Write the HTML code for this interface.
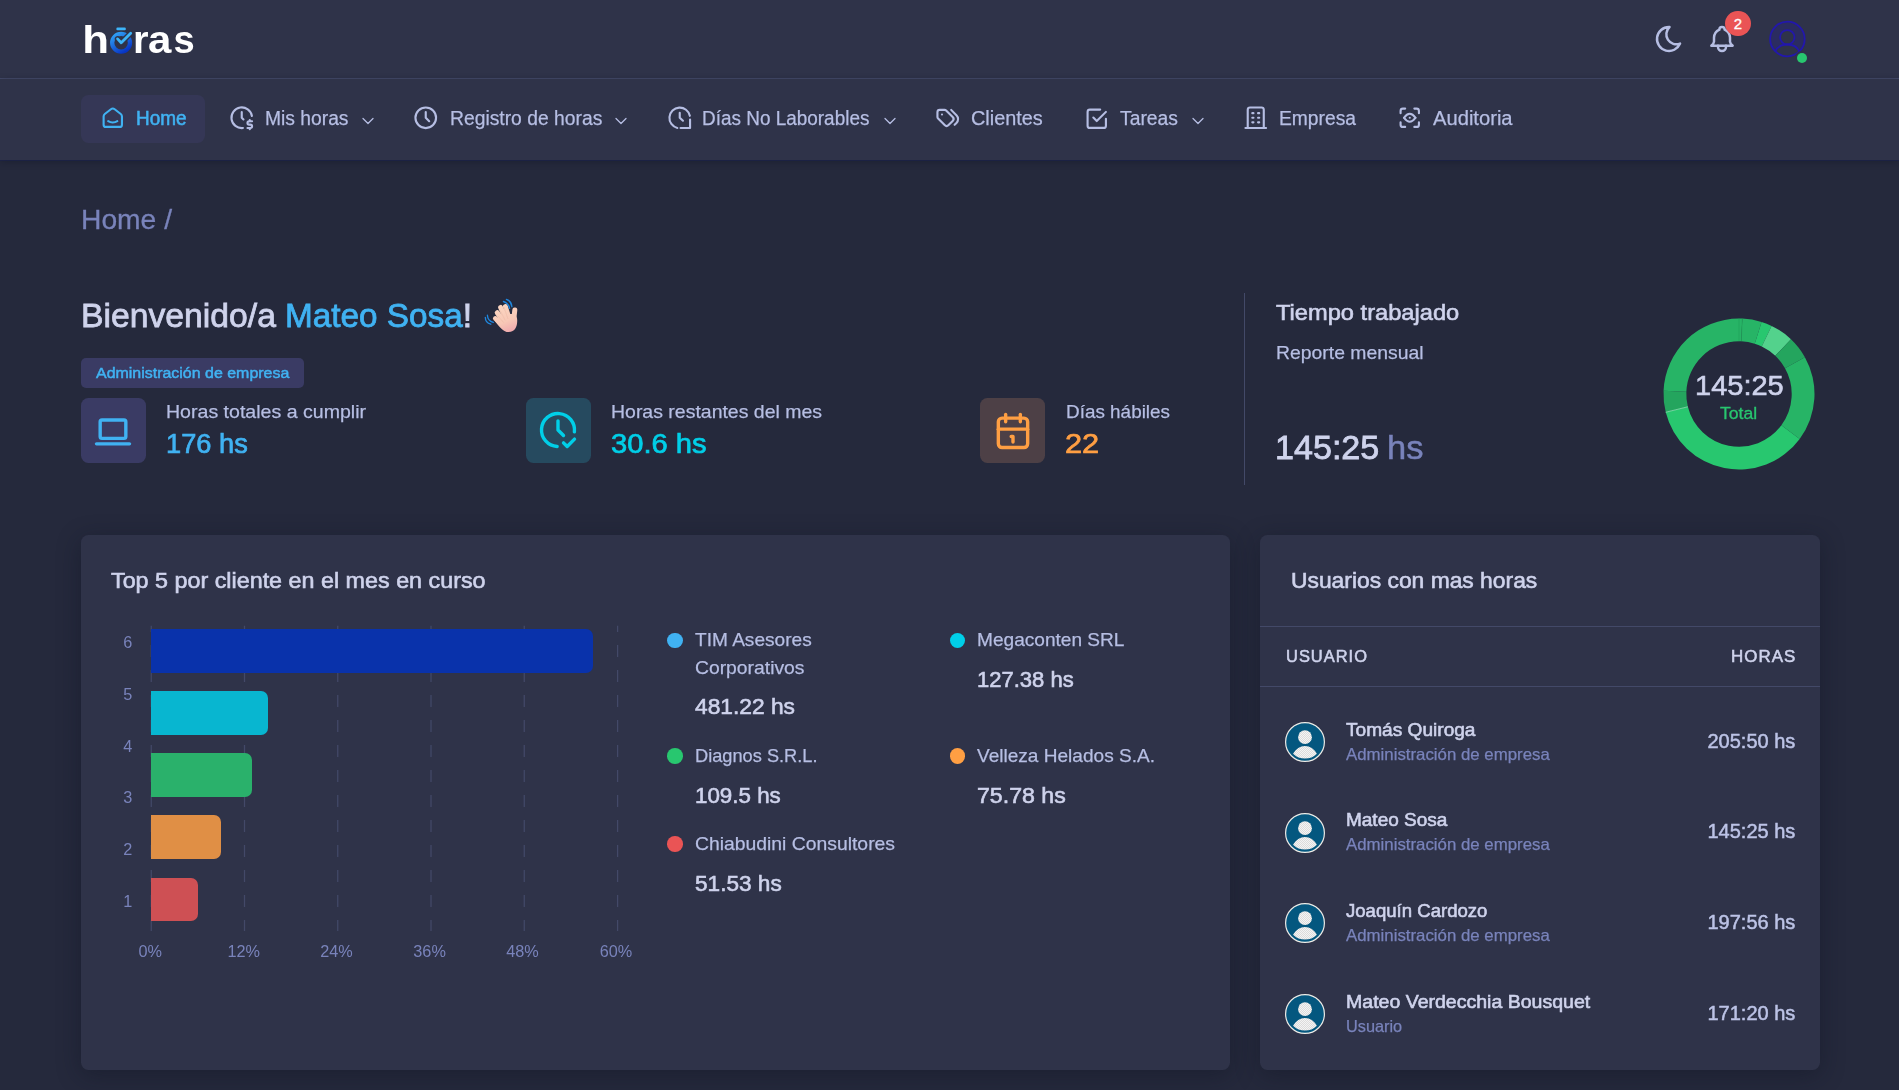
<!DOCTYPE html>
<html lang="es">
<head>
<meta charset="utf-8">
<title>Horas - Home</title>
<style>
*{box-sizing:border-box;margin:0;padding:0}
html,body{width:1899px;height:1090px;overflow:hidden;background:#25293c}
body{position:relative;font-family:"Liberation Sans",sans-serif;color:#b6bee3}
.abs{position:absolute}
.t{position:absolute;white-space:nowrap;line-height:1;font-family:"Liberation Sans",sans-serif}
.topbar{position:absolute;left:0;top:0;width:1899px;height:78px;background:#2f3349}
.topline{position:absolute;left:0;top:78px;width:1899px;height:1px;background:#434968}
.menu{position:absolute;left:0;top:79px;width:1899px;height:81px;background:#2f3349;box-shadow:0 1px 0 rgba(26,32,78,.55),0 2px 7px rgba(15,20,34,.4)}
.pill{position:absolute;left:81px;top:95px;width:123.6px;height:47.5px;border-radius:7.5px;background:#353756}
.card{position:absolute;background:#2f3349;border-radius:7.5px;box-shadow:0 5px 23px rgba(15,20,34,.42)}
.ico{position:absolute;fill:none;stroke:#b6bee3;stroke-width:1.85;stroke-linecap:round;stroke-linejoin:round;overflow:visible}
.box{position:absolute;top:398px;width:65px;height:64.5px;border-radius:7.5px}
.dot{position:absolute;width:15.6px;height:15.6px;border-radius:50%}
.hr{position:absolute;height:1px;background:#434968}
.bar{position:absolute;left:151.25px;height:43.5px;border-radius:0 7px 7px 0}
.av{position:absolute;left:1285px;width:40px;height:40px}
</style>
</head>
<body>
<div class="topbar"></div>
<div class="topline"></div>
<div class="menu"></div>
<div class="pill"></div>

<!-- logo -->
<svg class="abs" style="left:80px;top:18px;overflow:visible;will-change:transform" width="120" height="42" viewBox="0 0 120 42">
  <defs>
    <linearGradient id="lg" x1="0.15" y1="0" x2="0.75" y2="1"><stop offset="0" stop-color="#2f9ff5"/><stop offset="1" stop-color="#0734c4"/></linearGradient>
  </defs>
  <g font-family="Liberation Sans, sans-serif" font-weight="700" font-size="39.2" fill="#ffffff">
    <text transform="translate(2.14 34.5) scale(1.118 1)">h</text>
    <text transform="translate(52.96 34.5) scale(1.02 1)">r</text>
    <text transform="translate(67.98 34.5) scale(1.072 1)">a</text>
    <text transform="translate(93.47 34.5) scale(0.973 1)">s</text>
  </g>
  <circle cx="41.1" cy="24.7" r="8.9" fill="none" stroke="url(#lg)" stroke-width="4.3"/>
  <rect x="36.3" y="9.6" width="9.6" height="2.7" rx="1.35" fill="#3db4f8"/>
  <path d="M37.6 20.9l3.6 3.9l9.5-9.5" fill="none" stroke="#2f3349" stroke-width="5.6" stroke-linecap="round" stroke-linejoin="round"/>
  <path d="M37.6 20.9l3.6 3.9l9.5-9.5" fill="none" stroke="#3db4f8" stroke-width="2.8" stroke-linecap="round" stroke-linejoin="round"/>
</svg>

<!-- top right icons -->
<svg class="ico" style="left:1653px;top:23px" width="32" height="32" viewBox="0 0 24 24"><path d="M12 3c.132 0 .263 0 .393 0a7.5 7.5 0 0 0 7.92 12.446a9 9 0 1 1 -8.313 -12.454z"/></svg>
<svg class="ico" style="left:1705.9px;top:23px" width="32" height="32" viewBox="0 0 24 24"><path d="M10 5a2 2 0 1 1 4 0a7 7 0 0 1 4 6v3a4 4 0 0 0 2 3h-16a4 4 0 0 0 2 -3v-3a7 7 0 0 1 4 -6"/><path d="M9 17v1a3 3 0 0 0 6 0v-1"/></svg>
<div class="abs" style="left:1725.3px;top:10.8px;width:25.4px;height:25.4px;border-radius:50%;background:#ea5455"></div>
<div class="t" style="left:1725.3px;top:16.2px;width:25.4px;text-align:center;font-size:15px;color:#fff;-webkit-text-stroke:0.3px #fff">2</div>
<svg class="abs" style="left:1767px;top:19px;overflow:visible" width="40" height="40" viewBox="0 0 40 40"><circle cx="20.4" cy="20" r="17.3" fill="#2b2c60"/><path d="M8.300 32.100C10.600 27.700 15 25.500 20.300 25.500C25.600 25.500 30 27.700 32.300 32.100A17.300 17.300 0 0 1 8.300 32.100Z" fill="#2f3349"/><circle cx="20.300" cy="18.300" r="7.200" fill="#2f3349" stroke="#2217ad" stroke-width="1.800"/><path d="M8.300 32.100C10.600 27.700 15 25.500 20.300 25.500C25.600 25.500 30 27.700 32.300 32.100" fill="none" stroke="#2217ad" stroke-width="1.800"/><circle cx="20.400" cy="20" r="17.300" fill="none" stroke="#2217ad" stroke-width="1.800"/></svg>
<div class="abs" style="left:1796.800px;top:52.600px;width:10.400px;height:10.400px;border-radius:50%;background:#28c76f;box-shadow:0 0 0 2px #2f3349"></div>

<!-- nav icons -->
<svg class="ico" style="left:98.9px;top:104.4px;stroke:#40b2f2" width="27.5" height="27.5" viewBox="0 0 24 24"><path d="M19 8.71l-5.333 -4.148a2.666 2.666 0 0 0 -3.274 0l-5.334 4.148a2.665 2.665 0 0 0 -1.029 2.105v7.2a2 2 0 0 0 2 2h12a2 2 0 0 0 2 -2v-7.2c0 -.823 -.38 -1.6 -1.03 -2.105"/><path d="M16 15c-2.21 1.333 -5.792 1.333 -8 0"/></svg>
<svg class="ico" style="left:228px;top:104px" width="27.5" height="27.5" viewBox="0 0 24 24"><path d="M20.866 10.45a9 9 0 1 0 -7.815 10.488"/><path d="M12 7v5l1.5 1.5"/><path d="M21 15h-2.500a1.500 1.500 0 0 0 0 3h1a1.500 1.500 0 0 1 0 3h-2.500"/><path d="M19 21v1m0 -8v1"/></svg>
<svg class="ico" style="left:412px;top:104.2px" width="27.5" height="27.5" viewBox="0 0 24 24"><path d="M3 12a9 9 0 1 0 18 0a9 9 0 0 0 -18 0"/><path d="M12 7v5l3 3"/></svg>
<svg class="ico" style="left:665.7px;top:104px" width="27.5" height="27.5" viewBox="0 0 24 24"><path d="M20.8 10.3a9 9 0 1 0 -10.9 10.62"/><path d="M12 7.7v4.3l2.8 2.6"/><path d="M21 13.6v7.4h-8.3"/></svg>
<svg class="ico" style="left:933.7px;top:103.2px" width="27.5" height="27.5" viewBox="0 0 24 24"><path d="M3 8v4.172a2 2 0 0 0 .586 1.414l5.71 5.71a2.41 2.41 0 0 0 3.408 0l3.592 -3.592a2.41 2.41 0 0 0 0 -3.408l-5.71 -5.71a2 2 0 0 0 -1.414 -.586h-4.172a2 2 0 0 0 -2 2z"/><path d="M18 19l1.592 -1.592a4.82 4.82 0 0 0 0 -6.816l-4.592 -4.592"/><path d="M7 10h-.01"/></svg>
<svg class="ico" style="left:1083.2px;top:104.5px" width="27.5" height="27.5" viewBox="0 0 24 24"><path d="M9 11l3 3l8 -8"/><path d="M20 12v6a2 2 0 0 1 -2 2h-12a2 2 0 0 1 -2 -2v-12a2 2 0 0 1 2 -2h9"/></svg>
<svg class="ico" style="left:1241.7px;top:104.2px" width="27.5" height="27.5" viewBox="0 0 24 24"><path d="M3 21l18 0"/><path d="M9 8l1 0"/><path d="M9 12l1 0"/><path d="M9 16l1 0"/><path d="M14 8l1 0"/><path d="M14 12l1 0"/><path d="M14 16l1 0"/><path d="M5 21v-16a2 2 0 0 1 2 -2h10a2 2 0 0 1 2 2v16"/></svg>
<svg class="ico" style="left:1395.7px;top:104.2px" width="27.5" height="27.5" viewBox="0 0 24 24"><path d="M4 8v-2a2 2 0 0 1 2 -2h2"/><path d="M4 16v2a2 2 0 0 0 2 2h2"/><path d="M16 4h2a2 2 0 0 1 2 2v2"/><path d="M16 20h2a2 2 0 0 0 2 -2v-2"/><path d="M7 12c3.333 -4.667 6.667 -4.667 10 0"/><path d="M7 12c3.333 4.667 6.667 4.667 10 0"/><path d="M12 12h-.01"/></svg>
<!-- chevrons -->
<svg class="ico" style="left:357.5px;top:110.6px;stroke-width:1.5" width="20" height="20" viewBox="0 0 24 24"><path d="M6 9l6 6l6 -6"/></svg>
<svg class="ico" style="left:611.0px;top:110.6px;stroke-width:1.5" width="20" height="20" viewBox="0 0 24 24"><path d="M6 9l6 6l6 -6"/></svg>
<svg class="ico" style="left:880.0px;top:110.6px;stroke-width:1.5" width="20" height="20" viewBox="0 0 24 24"><path d="M6 9l6 6l6 -6"/></svg>
<svg class="ico" style="left:1187.7px;top:110.6px;stroke-width:1.5" width="20" height="20" viewBox="0 0 24 24"><path d="M6 9l6 6l6 -6"/></svg>

<!-- waving hand emoji -->
<svg class="abs" style="left:475px;top:290px;overflow:visible" width="60" height="50" viewBox="0 0 60 50">
  <defs>
    <linearGradient id="hg" gradientUnits="userSpaceOnUse" x1="24" y1="14" x2="36" y2="43"><stop offset="0" stop-color="#fcd7c3"/><stop offset="0.6" stop-color="#f8c8b6"/><stop offset="1" stop-color="#efa6ad"/></linearGradient>
  </defs>
  <g stroke="url(#hg)" stroke-width="4.9" stroke-linecap="round" fill="none">
    <path d="M20.4 28.5L28.4 35.8"/>
    <path d="M22.2 22.7L30.3 33.9"/>
    <path d="M25.6 17.4L32.1 32.1"/>
    <path d="M30.4 16.500L34.9 31.2"/>
    <path d="M39.8 20L38.5 32" stroke-width="5"/>
  </g>
  <path d="M20.200 31.400C22 27 30 24 36 24C39.500 24 42.200 26 42.200 30C42.400 36 40.500 42 33.500 42C28.500 42 25 37.500 20.200 31.400Z" fill="url(#hg)"/>
  <g fill="none" stroke="#eab7a4" stroke-width="0.55" stroke-linecap="round" opacity="0.8"><path d="M23.200 26.300L28.300 32.200"/><path d="M25.400 21L30 30"/><path d="M29.100 17.400L32.800 28.500"/></g>
  <g fill="none" stroke="#1f86dd" stroke-width="1.350" stroke-linecap="round">
    <path d="M10.300 27.300C10.300 30.800 12.600 33.400 15.800 34.200"/>
    <path d="M12.400 25.200C12.600 29 14.900 31.400 18.300 32.300"/>
    <path d="M31.400 9.400C34.600 10.500 36.600 13.300 36.900 16.700"/>
    <path d="M28.400 11.500C31.700 12.600 33.900 15 34.600 18.300"/>
  </g>
</svg>

<!-- badge -->
<div class="abs" style="left:81px;top:358px;width:222.8px;height:29.8px;border-radius:5px;background:#3a3b64"></div>

<!-- stat boxes -->
<div class="box" style="left:81px;background:#3a3b64"></div>
<div class="box" style="left:526px;background:#264a5f"></div>
<div class="box" style="left:980px;background:#4d4046"></div>
<svg class="ico" style="left:91.3px;top:408.7px;stroke:#40b2f2" width="44" height="44" viewBox="0 0 24 24"><path d="M3 19l18 0"/><path d="M5 6m0 1a1 1 0 0 1 1 -1h12a1 1 0 0 1 1 1v8a1 1 0 0 1 -1 1h-12a1 1 0 0 1 -1 -1z"/></svg>
<svg class="ico" style="left:535.9px;top:407.8px;stroke:#00cfe8" width="44" height="44" viewBox="0 0 24 24"><path d="M20.942 13.021a9 9 0 1 0 -9.407 7.967"/><path d="M12 7v5l3 3"/><path d="M15 19l2 2l4 -4"/></svg>
<svg class="ico" style="left:991px;top:408.5px;stroke:#ff9f43" width="44" height="44" viewBox="0 0 24 24"><path d="M4 7a2 2 0 0 1 2 -2h12a2 2 0 0 1 2 2v12a2 2 0 0 1 -2 2h-12a2 2 0 0 1 -2 -2z"/><path d="M16 3v4"/><path d="M8 3v4"/><path d="M4 11h16"/><path d="M11 15h1v3"/></svg>

<!-- vertical divider -->
<div class="abs" style="left:1244px;top:293px;width:1px;height:192px;background:#434968"></div>

<!-- donut -->
<svg class="abs" id="donut" style="left:1659.4px;top:314.2px" width="160" height="160" viewBox="-80 -80 160 160">
<path d="M0.00 -75.50A75.5 75.5 0 0 1 3.29 -75.43L2.30 -52.65A52.7 52.7 0 0 0 0.00 -52.70Z" fill="#27b466"/>
<path d="M3.29 -75.43A75.5 75.5 0 0 1 22.58 -72.05L15.76 -50.29A52.7 52.7 0 0 0 2.30 -52.65Z" fill="#27b466"/>
<path d="M22.58 -72.05A75.5 75.5 0 0 1 32.62 -68.09L22.77 -47.53A52.7 52.7 0 0 0 15.76 -50.29Z" fill="#28c76f"/>
<path d="M32.62 -68.09A75.5 75.5 0 0 1 51.97 -54.77L36.28 -38.23A52.7 52.7 0 0 0 22.77 -47.53Z" fill="#53d28c"/>
<path d="M51.97 -54.77A75.5 75.5 0 0 1 65.91 -36.83L46.00 -25.71A52.7 52.7 0 0 0 36.28 -38.23Z" fill="#24a55e"/>
<path d="M65.91 -36.83A75.5 75.5 0 0 1 60.69 44.91L42.36 31.35A52.7 52.7 0 0 0 46.00 -25.71Z" fill="#27b466"/>
<path d="M60.69 44.91A75.5 75.5 0 0 1 -73.26 18.27L-51.13 12.75A52.7 52.7 0 0 0 42.36 31.35Z" fill="#28c76f"/>
<path d="M-73.26 18.27A75.5 75.5 0 0 1 -75.43 -3.16L-52.65 -2.21A52.7 52.7 0 0 0 -51.13 12.75Z" fill="#24a55e"/>
<path d="M-75.43 -3.16A75.5 75.5 0 0 1 -0.00 -75.50L-0.00 -52.70A52.7 52.7 0 0 0 -52.65 -2.21Z" fill="#27b466"/>
<path d="M0.00 -75.50L0.00 -52.70" stroke="#1f9a55" stroke-width="0.5" fill="none"/>
<path d="M3.29 -75.43L2.30 -52.65" stroke="#1f9a55" stroke-width="0.5" fill="none"/>
<path d="M-73.26 18.27L-51.13 12.75" stroke="#7fdcaa" stroke-width="0.9" fill="none"/>
</svg>

<!-- cards -->
<div class="card" style="left:81px;top:535px;width:1148.500px;height:534.700px"></div>
<div class="card" style="left:1260px;top:535px;width:1559.600px;height:534.700px;width:559.600px"></div>
<div class="hr" style="left:1260px;top:626px;width:559.600px"></div>
<div class="hr" style="left:1260px;top:686px;width:559.600px"></div>

<!-- chart -->
<svg class="abs" style="left:0;top:0" width="700" height="1000" viewBox="0 0 700 1000">
  <defs><clipPath id="gc"><rect x="140" y="625.750" width="500" height="305.250"/></clipPath></defs>
  <g clip-path="url(#gc)" stroke="#434968" stroke-width="1.250" stroke-dasharray="12 13" fill="none">
    <path d="M151.250 620V932M244.500 620V932M337.750 620V932M431 620V932M524.250 620V932M617.600 620V932"/>
  </g>
</svg>
<div class="bar" style="top:629px;width:442px;background:#0932ab"></div>
<div class="bar" style="top:691px;width:116.500px;background:#08b6d0"></div>
<div class="bar" style="top:753px;width:101px;background:#2ab16b"></div>
<div class="bar" style="top:815px;width:69.800px;background:#e08f45"></div>
<div class="bar" style="top:877.600px;width:46.700px;background:#ce5054"></div>

<!-- legend dots -->
<div class="dot" style="left:667.3px;top:632.7px;background:#40b2f2"></div>
<div class="dot" style="left:949.6px;top:632.7px;background:#00cfe8"></div>
<div class="dot" style="left:667.3px;top:748.4px;background:#28c76f"></div>
<div class="dot" style="left:949.6px;top:748.4px;background:#ff9f43"></div>
<div class="dot" style="left:667.3px;top:836.4px;background:#ea5455"></div>

<!-- avatars -->
<svg width="0" height="0" style="position:absolute"><defs>
  <pattern id="chk" width="2" height="2" patternUnits="userSpaceOnUse"><rect width="2" height="2" fill="#f4f4f4"/><rect width="1" height="1" fill="#dcdcdc"/><rect x="1" y="1" width="1" height="1" fill="#dcdcdc"/></pattern>
  <g id="avatar"><circle cx="20" cy="20" r="19.4" fill="#04577f" stroke="#ecebe6" stroke-width="1.2"/><circle cx="20" cy="15.2" r="6.9" fill="url(#chk)"/><path d="M8.1 31.7C11 27 15 24.1 20 24.1C25 24.1 29 27 31.9 31.7A17 17 0 0 1 8.1 31.7Z" fill="url(#chk)"/></g>
</defs></svg>
<svg class="av" style="top:721.9px" viewBox="0 0 40 40"><use href="#avatar"/></svg>
<svg class="av" style="top:812.65px" viewBox="0 0 40 40"><use href="#avatar"/></svg>
<svg class="av" style="top:903.4px" viewBox="0 0 40 40"><use href="#avatar"/></svg>
<svg class="av" style="top:994.15px" viewBox="0 0 40 40"><use href="#avatar"/></svg>

<!-- texts -->
<div style="position:absolute;left:0;top:0;width:1899px;height:1090px;will-change:transform">
<div class="t" style="font-size:19.6px;top:109.01px;color:#40b2f2;-webkit-text-stroke:0.55px #40b2f2;left:136.40px;transform:scaleX(0.9678);transform-origin:0 50%;">Home</div>
<div class="t" style="font-size:19.6px;top:109.01px;color:#b6bee3;-webkit-text-stroke:0.25px #b6bee3;left:264.70px;transform:scaleX(0.9831);transform-origin:0 50%;">Mis horas</div>
<div class="t" style="font-size:19.6px;top:109.01px;color:#b6bee3;-webkit-text-stroke:0.25px #b6bee3;left:449.50px;transform:scaleX(0.9848);transform-origin:0 50%;">Registro de horas</div>
<div class="t" style="font-size:19.6px;top:109.01px;color:#b6bee3;-webkit-text-stroke:0.25px #b6bee3;left:702.40px;transform:scaleX(0.9666);transform-origin:0 50%;">Días No Laborables</div>
<div class="t" style="font-size:19.6px;top:109.01px;color:#b6bee3;-webkit-text-stroke:0.25px #b6bee3;left:970.80px;transform:scaleX(1.0142);transform-origin:0 50%;">Clientes</div>
<div class="t" style="font-size:19.6px;top:109.01px;color:#b6bee3;-webkit-text-stroke:0.25px #b6bee3;left:1119.60px;transform:scaleX(0.9862);transform-origin:0 50%;">Tareas</div>
<div class="t" style="font-size:19.6px;top:109.01px;color:#b6bee3;-webkit-text-stroke:0.25px #b6bee3;left:1278.80px;transform:scaleX(0.9821);transform-origin:0 50%;">Empresa</div>
<div class="t" style="font-size:19.6px;top:109.01px;color:#b6bee3;-webkit-text-stroke:0.25px #b6bee3;left:1433.40px;transform:scaleX(1.0292);transform-origin:0 50%;">Auditoria</div>
<div class="t" style="font-size:28.5px;top:204.87px;color:#7983bb;-webkit-text-stroke:0.3px #7983bb;left:81.00px;transform:scaleX(0.9905);transform-origin:0 50%;">Home /</div>
<div class="t" style="font-size:33.5px;top:298.74px;color:#cfd3ec;-webkit-text-stroke:0.8px #cfd3ec;left:81.30px;transform:scaleX(1.0066);transform-origin:0 50%;">Bienvenido/a</div>
<div class="t" style="font-size:33.5px;top:298.74px;color:#40b2f2;-webkit-text-stroke:0.8px #40b2f2;left:284.80px;transform:scaleX(0.9945);transform-origin:0 50%;">Mateo Sosa</div>
<div class="t" style="font-size:33.5px;top:298.74px;color:#cfd3ec;-webkit-text-stroke:1.0px #cfd3ec;left:462.70px;">!</div>
<div class="t" style="font-size:15.4px;top:365.06px;color:#40b2f2;-webkit-text-stroke:0.5px #40b2f2;left:96.00px;transform:scaleX(1.0365);transform-origin:0 50%;">Administración de empresa</div>
<div class="t" style="font-size:19px;top:401.92px;color:#b6bee3;-webkit-text-stroke:0.25px #b6bee3;left:166.25px;transform:scaleX(1.0294);transform-origin:0 50%;">Horas totales a cumplir</div>
<div class="t" style="font-size:27.5px;top:429.62px;color:#40b2f2;-webkit-text-stroke:0.7px #40b2f2;left:165.60px;transform:scaleX(0.9906);transform-origin:0 50%;">176 hs</div>
<div class="t" style="font-size:19px;top:401.92px;color:#b6bee3;-webkit-text-stroke:0.25px #b6bee3;left:611.00px;transform:scaleX(1.0247);transform-origin:0 50%;">Horas restantes del mes</div>
<div class="t" style="font-size:27.5px;top:429.62px;color:#00cfe8;-webkit-text-stroke:0.7px #00cfe8;left:610.60px;transform:scaleX(1.0596);transform-origin:0 50%;">30.6 hs</div>
<div class="t" style="font-size:19px;top:401.92px;color:#b6bee3;-webkit-text-stroke:0.25px #b6bee3;left:1065.80px;transform:scaleX(0.9946);transform-origin:0 50%;">Días hábiles</div>
<div class="t" style="font-size:27.5px;top:429.62px;color:#ff9f43;-webkit-text-stroke:0.7px #ff9f43;left:1065.40px;transform:scaleX(1.1179);transform-origin:0 50%;">22</div>
<div class="t" style="font-size:22px;top:302.28px;color:#cfd3ec;-webkit-text-stroke:0.6px #cfd3ec;left:1275.80px;transform:scaleX(1.0751);transform-origin:0 50%;">Tiempo trabajado</div>
<div class="t" style="font-size:19px;top:342.72px;color:#b6bee3;-webkit-text-stroke:0.25px #b6bee3;left:1275.50px;transform:scaleX(1.0193);transform-origin:0 50%;">Reporte mensual</div>
<div class="t" style="font-size:33.5px;top:431.14px;color:#cfd3ec;-webkit-text-stroke:0.8px #cfd3ec;left:1275.30px;transform:scaleX(1.0179);transform-origin:0 50%;">145:25</div>
<div class="t" style="font-size:33.5px;top:431.14px;color:#7983bb;-webkit-text-stroke:0.5px #7983bb;left:1386.80px;transform:scaleX(1.0285);transform-origin:0 50%;">hs</div>
<div class="t" style="font-size:27.5px;top:372.32px;color:#cfd3ec;-webkit-text-stroke:0.6px #cfd3ec;left:1694.50px;transform:scaleX(1.0544);transform-origin:0 50%;">145:25</div>
<div class="t" style="font-size:16.25px;top:405.14px;color:#28c76f;-webkit-text-stroke:0.3px #28c76f;left:1720.20px;transform:scaleX(1.0837);transform-origin:0 50%;">Total</div>
<div class="t" style="font-size:22px;top:570.18px;color:#cfd3ec;-webkit-text-stroke:0.6px #cfd3ec;left:111.25px;transform:scaleX(1.0598);transform-origin:0 50%;">Top 5 por cliente en el mes en curso</div>
<div class="t" style="font-size:16.25px;top:634.04px;color:#7983bb;right:1766.60px;">6</div>
<div class="t" style="font-size:16.25px;top:685.84px;color:#7983bb;right:1766.60px;">5</div>
<div class="t" style="font-size:16.25px;top:737.64px;color:#7983bb;right:1766.60px;">4</div>
<div class="t" style="font-size:16.25px;top:789.44px;color:#7983bb;right:1766.60px;">3</div>
<div class="t" style="font-size:16.25px;top:841.24px;color:#7983bb;right:1766.60px;">2</div>
<div class="t" style="font-size:16.25px;top:893.04px;color:#7983bb;right:1766.60px;">1</div>
<div class="t" style="font-size:16.25px;top:943.24px;color:#7983bb;left:-49.75px;width:400px;text-align:center;">0%</div>
<div class="t" style="font-size:16.25px;top:943.24px;color:#7983bb;left:43.75px;width:400px;text-align:center;">12%</div>
<div class="t" style="font-size:16.25px;top:943.24px;color:#7983bb;left:136.40px;width:400px;text-align:center;">24%</div>
<div class="t" style="font-size:16.25px;top:943.24px;color:#7983bb;left:229.60px;width:400px;text-align:center;">36%</div>
<div class="t" style="font-size:16.25px;top:943.24px;color:#7983bb;left:322.40px;width:400px;text-align:center;">48%</div>
<div class="t" style="font-size:16.25px;top:943.24px;color:#7983bb;left:416.00px;width:400px;text-align:center;">60%</div>
<div class="t" style="font-size:19px;top:630.22px;color:#b6bee3;-webkit-text-stroke:0.25px #b6bee3;left:695.00px;transform:scaleX(1.0051);transform-origin:0 50%;">TIM Asesores</div>
<div class="t" style="font-size:19px;top:658.22px;color:#b6bee3;-webkit-text-stroke:0.25px #b6bee3;left:695.00px;transform:scaleX(1.0165);transform-origin:0 50%;">Corporativos</div>
<div class="t" style="font-size:22px;top:696.18px;color:#cfd3ec;-webkit-text-stroke:0.6px #cfd3ec;left:695.00px;transform:scaleX(1.0348);transform-origin:0 50%;">481.22 hs</div>
<div class="t" style="font-size:19px;top:630.22px;color:#b6bee3;-webkit-text-stroke:0.25px #b6bee3;left:977.00px;transform:scaleX(1.0046);transform-origin:0 50%;">Megaconten SRL</div>
<div class="t" style="font-size:22px;top:669.08px;color:#cfd3ec;-webkit-text-stroke:0.6px #cfd3ec;left:977.00px;transform:scaleX(1.0011);transform-origin:0 50%;">127.38 hs</div>
<div class="t" style="font-size:19px;top:746.42px;color:#b6bee3;-webkit-text-stroke:0.25px #b6bee3;left:695.00px;transform:scaleX(0.9586);transform-origin:0 50%;">Diagnos S.R.L.</div>
<div class="t" style="font-size:22px;top:784.78px;color:#cfd3ec;-webkit-text-stroke:0.6px #cfd3ec;left:695.00px;transform:scaleX(1.0159);transform-origin:0 50%;">109.5 hs</div>
<div class="t" style="font-size:19px;top:746.42px;color:#b6bee3;-webkit-text-stroke:0.25px #b6bee3;left:977.00px;transform:scaleX(1.0031);transform-origin:0 50%;">Velleza Helados S.A.</div>
<div class="t" style="font-size:22px;top:784.78px;color:#cfd3ec;-webkit-text-stroke:0.6px #cfd3ec;left:977.00px;transform:scaleX(1.0515);transform-origin:0 50%;">75.78 hs</div>
<div class="t" style="font-size:19px;top:834.42px;color:#b6bee3;-webkit-text-stroke:0.25px #b6bee3;left:695.00px;transform:scaleX(1.0181);transform-origin:0 50%;">Chiabudini Consultores</div>
<div class="t" style="font-size:22px;top:872.78px;color:#cfd3ec;-webkit-text-stroke:0.6px #cfd3ec;left:695.00px;transform:scaleX(1.0278);transform-origin:0 50%;">51.53 hs</div>
<div class="t" style="font-size:22px;top:569.63px;color:#cfd3ec;-webkit-text-stroke:0.6px #cfd3ec;left:1291.25px;transform:scaleX(1.0381);transform-origin:0 50%;">Usuarios con mas horas</div>
<div class="t" style="font-size:16.2px;top:648.29px;color:#cfd3ec;letter-spacing:1.0px;-webkit-text-stroke:0.55px #cfd3ec;left:1285.60px;transform:scaleX(1.0153);transform-origin:0 50%;">USUARIO</div>
<div class="t" style="font-size:16.2px;top:648.29px;color:#cfd3ec;letter-spacing:1.0px;-webkit-text-stroke:0.55px #cfd3ec;left:1731.00px;transform:scaleX(1.0435);transform-origin:0 50%;">HORAS</div>
<div class="t" style="font-size:18.5px;top:720.74px;color:#cfd3ec;-webkit-text-stroke:0.6px #cfd3ec;left:1346.25px;transform:scaleX(1.0323);transform-origin:0 50%;">Tomás Quiroga</div>
<div class="t" style="font-size:16.5px;top:745.53px;color:#7983bb;-webkit-text-stroke:0.25px #7983bb;left:1346.25px;transform:scaleX(1.0191);transform-origin:0 50%;">Administración de empresa</div>
<div class="t" style="font-size:20px;top:730.67px;color:#bcc3e6;-webkit-text-stroke:0.5px #bcc3e6;right:103.70px;">205:50 hs</div>
<div class="t" style="font-size:18.5px;top:811.49px;color:#cfd3ec;-webkit-text-stroke:0.6px #cfd3ec;left:1346.25px;transform:scaleX(1.0255);transform-origin:0 50%;">Mateo Sosa</div>
<div class="t" style="font-size:16.5px;top:836.28px;color:#7983bb;-webkit-text-stroke:0.25px #7983bb;left:1346.25px;transform:scaleX(1.0191);transform-origin:0 50%;">Administración de empresa</div>
<div class="t" style="font-size:20px;top:821.42px;color:#bcc3e6;-webkit-text-stroke:0.5px #bcc3e6;right:103.70px;">145:25 hs</div>
<div class="t" style="font-size:18.5px;top:902.24px;color:#cfd3ec;-webkit-text-stroke:0.6px #cfd3ec;left:1346.25px;transform:scaleX(1.0039);transform-origin:0 50%;">Joaquín Cardozo</div>
<div class="t" style="font-size:16.5px;top:927.03px;color:#7983bb;-webkit-text-stroke:0.25px #7983bb;left:1346.25px;transform:scaleX(1.0191);transform-origin:0 50%;">Administración de empresa</div>
<div class="t" style="font-size:20px;top:912.17px;color:#bcc3e6;-webkit-text-stroke:0.5px #bcc3e6;right:103.70px;">197:56 hs</div>
<div class="t" style="font-size:18.5px;top:992.99px;color:#cfd3ec;-webkit-text-stroke:0.6px #cfd3ec;left:1346.25px;transform:scaleX(1.0555);transform-origin:0 50%;">Mateo Verdecchia Bousquet</div>
<div class="t" style="font-size:16.5px;top:1017.78px;color:#7983bb;-webkit-text-stroke:0.25px #7983bb;left:1346.25px;transform:scaleX(0.9875);transform-origin:0 50%;">Usuario</div>
<div class="t" style="font-size:20px;top:1002.92px;color:#bcc3e6;-webkit-text-stroke:0.5px #bcc3e6;right:103.70px;">171:20 hs</div>
</div>
</body>
</html>
